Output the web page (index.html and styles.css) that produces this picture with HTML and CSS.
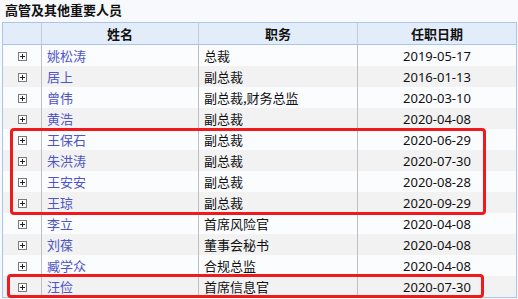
FILE: index.html
```html
<!DOCTYPE html>
<html lang="zh">
<head>
<meta charset="utf-8">
<link rel="stylesheet" href="styles.css">
</head>
<body>
<div class="page">
  <h1 class="title">高管及其他重要人员</h1>
  <div class="wrap">
    <table class="grid">
      <colgroup>
        <col class="c-exp"><col class="c-name"><col class="c-pos"><col class="c-date">
      </colgroup>
      <thead>
        <tr><th></th><th>姓名</th><th>职务</th><th>任职日期</th></tr>
      </thead>
      <tbody>
        <tr><td class="exp"><span class="plus"></span></td><td class="name">姚松涛</td><td class="pos">总裁</td><td class="date">2019-05-17</td></tr>
        <tr><td class="exp"><span class="plus"></span></td><td class="name">居上</td><td class="pos">副总裁</td><td class="date">2016-01-13</td></tr>
        <tr><td class="exp"><span class="plus"></span></td><td class="name">曾伟</td><td class="pos">副总裁,财务总监</td><td class="date">2020-03-10</td></tr>
        <tr><td class="exp"><span class="plus"></span></td><td class="name">黄浩</td><td class="pos">副总裁</td><td class="date">2020-04-08</td></tr>
        <tr><td class="exp"><span class="plus"></span></td><td class="name">王保石</td><td class="pos">副总裁</td><td class="date">2020-06-29</td></tr>
        <tr><td class="exp"><span class="plus"></span></td><td class="name">朱洪涛</td><td class="pos">副总裁</td><td class="date">2020-07-30</td></tr>
        <tr><td class="exp"><span class="plus"></span></td><td class="name">王安安</td><td class="pos">副总裁</td><td class="date">2020-08-28</td></tr>
        <tr><td class="exp"><span class="plus"></span></td><td class="name">王琼</td><td class="pos">副总裁</td><td class="date">2020-09-29</td></tr>
        <tr><td class="exp"><span class="plus"></span></td><td class="name">李立</td><td class="pos">首席风险官</td><td class="date">2020-04-08</td></tr>
        <tr><td class="exp"><span class="plus"></span></td><td class="name">刘葆</td><td class="pos">董事会秘书</td><td class="date">2020-04-08</td></tr>
        <tr><td class="exp"><span class="plus"></span></td><td class="name">臧学众</td><td class="pos">合规总监</td><td class="date">2020-04-08</td></tr>
        <tr><td class="exp"><span class="plus"></span></td><td class="name">汪俭</td><td class="pos">首席信息官</td><td class="date">2020-07-30</td></tr>
      </tbody>
    </table>
    <div class="mark mark-a"></div>
    <div class="mark mark-b"></div>
  </div>
</div>
</body>
</html>
```

FILE: styles.css
```css
html, body {
  margin: 0;
  padding: 0;
  background: #f8f9fc;
}
body {
  font-family: "Noto Sans", "Noto Sans CJK SC", sans-serif;
  font-size: 13px;
  color: #111;
}
.page {
  width: 518px;
  height: 299px;
  overflow: hidden;
}
.title {
  margin: 0;
  padding-left: 5px;
  height: 22px;
  line-height: 22px;
  font-size: 13px;
  font-weight: bold;
  color: #111;
  font-family: "Noto Sans CJK SC", sans-serif;
  position: relative;
  top: -1px;
}
.wrap {
  position: relative;
  margin-left: 2px;
  width: 514px;
}
.grid {
  width: 514px;
  table-layout: fixed;
  border-collapse: collapse;
  border: 1px solid #a9c5eb;
}
.c-exp { width: 39px; }
.c-name { width: 157px; }
.c-pos { width: 159px; }
.c-date { width: 159px; }
.grid th {
  height: 21px;
  padding: 0;
  background: #e3ecf9;
  border-left: 1px solid #c4cbd6;
  border-bottom: 1px solid #a9c5eb;
  font-family: "Noto Sans CJK SC", sans-serif;
  font-weight: bold;
  font-size: 13px;
  text-align: center;
  color: #111;
}
.grid th:first-child { border-left: none; }
.grid td {
  height: 21px;
  padding: 0;
  border-left: 1px solid #c0c0c0;
  white-space: nowrap;
  overflow: hidden;
  line-height: 20px;
}
.grid td:first-child { border-left: none; }
.grid tbody tr:nth-child(odd) td { background: #fbfcfe; }
.grid tbody tr:nth-child(even) td { background: #f2f2f2; }
.exp { text-align: center; }
.plus {
  display: inline-block;
  width: 7px;
  height: 7px;
  border: 1px solid #7a7a7a;
  background: #fff linear-gradient(#222, #222) center / 5px 1px no-repeat;
  position: relative;
  vertical-align: middle;
  top: -1px;
}
.plus::after {
  content: "";
  position: absolute;
  left: 3px;
  top: 1px;
  width: 1px;
  height: 5px;
  background: #222;
}
.name {
  padding-left: 5px !important;
  color: #4f55c4;
  font-family: "Noto Sans CJK SC", sans-serif;
}
.pos {
  padding-left: 5px !important;
  font-family: "Noto Sans CJK SC", sans-serif;
}
.date {
  text-align: center;
  font-family: "Noto Sans", sans-serif;
}
.mark {
  position: absolute;
  border: 3px solid #f0191b;
  border-radius: 4px;
  box-sizing: border-box;
  pointer-events: none;
}
.mark-a {
  left: 8px;
  top: 106px;
  width: 476px;
  height: 87px;
}
.mark-b {
  left: 5px;
  top: 252px;
  width: 477px;
  height: 24px;
}
```
